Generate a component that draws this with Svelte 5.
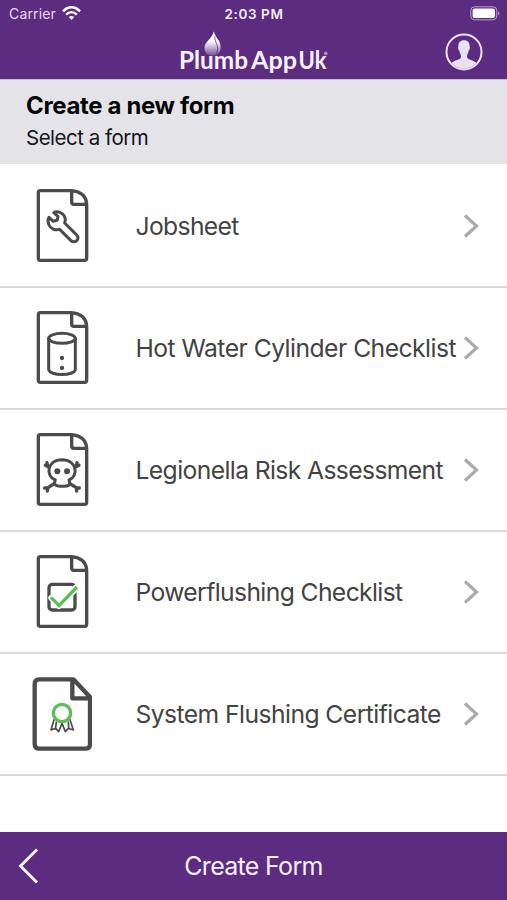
<script lang="ts">
  interface FormItem {
    icon: string
    label: string
    spacing: number
  }

  const forms: FormItem[] = [
    { icon: 'wrench', label: 'Jobsheet', spacing: -0.66 },
    { icon: 'cylinder', label: 'Hot Water Cylinder Checklist', spacing: -0.54 },
    { icon: 'skull', label: 'Legionella Risk Assessment', spacing: -0.62 },
    { icon: 'check', label: 'Powerflushing Checklist', spacing: -0.63 },
    { icon: 'certificate', label: 'System Flushing Certificate', spacing: -0.57 },
  ]
</script>

<div class="screen">
  <header class="top">
    <div class="status">
      <div class="carrier">
        <span>Carrier</span>
        <svg width="19" height="15" viewBox="0 0 19 15" fill="none" stroke="#fff" stroke-width="2.5">
          <path d="M1 5.4C6-.2 13-.2 18 5.4" />
          <path d="M4.2 8.6c3.2-3.2 7.4-3.2 10.6 0" />
          <path d="M6.7 11.1q2.8-2.4 5.6 0L9.5 14z" fill="#fff" stroke="none" />
        </svg>
      </div>
      <span class="time">2:03 PM</span>
      <svg class="battery" width="31" height="15" viewBox="0 0 31 15">
        <rect x=".8" y=".8" width="26" height="13" rx="3.8" fill="none" stroke="#b9a2cc" stroke-width="1" />
        <rect x="2.6" y="2.6" width="22.4" height="9.4" rx="2" fill="#fff" />
        <path d="M28.2 5.2q2.4 2.1 0 4.2z" fill="#b9a2cc" />
      </svg>
    </div>
    <div class="brand">
      <svg class="logo" width="156" height="46" viewBox="0 0 156 46">
        <defs>
          <linearGradient id="flame" x1="0" y1="0" x2="0" y2="1">
            <stop offset=".4" stop-color="#fff" />
            <stop offset="1" stop-color="#79509a" />
          </linearGradient>
        </defs>
        <path d="M36.8 2.2C38 9 44.2 11 43.6 19.2c-.3 4.6-3.6 7.3-8 7.3-5.5 0-8.6-3.7-8.1-8.6C28 12.3 35.5 9.5 36.8 2.2z" fill="url(#flame)" />
        <path d="M37.8 7.5c-.4 6.5 5.4 9.5 1.6 17" fill="none" stroke="#5c2c80" stroke-width=".8" />
        <g class="wordmark">
          <text x="2" y="40.3" textLength="69" lengthAdjust="spacingAndGlyphs">Plumb</text>
          <text x="74" y="40.3" textLength="46" lengthAdjust="spacingAndGlyphs">App</text>
          <text x="121.5" y="40.3" textLength="28" lengthAdjust="spacingAndGlyphs">Uk</text>
        </g>
        <circle cx="148.8" cy="24.4" r="1.9" fill="#a88dbd" />
      </svg>
      <svg class="profile" width="38" height="38" viewBox="0 0 38 38">
        <circle cx="19" cy="19" r="17.5" fill="none" stroke="#e9e0f0" stroke-width="2" />
        <path d="M19 7.2c-4.2 0-6 2.8-5.6 6.6-.9 1 .1 3.3 1 4 .3 2.3 1 3.2 1.5 4.1v2.5c-.8 2.7-6.3 2.1-9.4 5.7a16.5 16.5 0 0 0 25 0c-3.1-3.6-8.6-3-9.4-5.7v-2.5c.5-.9 1.2-1.8 1.5-4.1.9-.7 1.9-3 1-4C25 10 23.2 7.2 19 7.2z" fill="#e9e0f0" />
      </svg>
    </div>
  </header>

  <section class="heading">
    <h1>Create a new form</h1>
    <p>Select a form</p>
  </section>

  <main class="list">
    {#each forms as form}
      <div class="row">
        <svg class="doc" width="60" height="80" viewBox="36 18 180 240" fill="none" stroke="#4b4b4b" stroke-linecap="round" stroke-linejoin="round">
          {#if form.icon === 'certificate'}
            <path d="M160 34H58Q44 34 44 48V228Q44 242 58 242H196Q210 242 210 228V87zM157 36V91H208" stroke-width="13" />
            <path d="M102 155l-9 31 14-5 9 10 10-25 10 25 9-10 15 5-10-31M109 162l-2 17M145 162l1 17" stroke-width="5" />
            <circle cx="126" cy="135" r="26" fill="#fff" stroke="#5dbe57" stroke-width="10" />
          {:else}
            <path d="M153 32H61Q55 32 55 38V235Q55 241 61 241H194Q200 241 200 235V76Q200 36 153 32zM155 33V66Q155 73 162 73H198" stroke-width="10" />
            {#if form.icon === 'wrench'}
              <path d="M101 98C112 91 129 98 134 110C137 117 136 124 134 129L169 164C183 177 164 193 152 181L119 148C105 152 92 146 87 135C83 126 83 119 87 112L100 124L112 120L114 109Z" stroke-width="9" />
            {:else if form.icon === 'cylinder'}
              <ellipse cx="126" cy="109" rx="40" ry="15" stroke-width="9" />
              <path d="M86 109V202C88 223 164 223 166 202V109" stroke-width="9" />
              <circle cx="126" cy="168" r="6.5" fill="#4b4b4b" stroke="none" />
              <circle cx="126" cy="198" r="6.5" fill="#4b4b4b" stroke="none" />
            {:else if form.icon === 'skull'}
              <path d="M76 124L88 130M81 116L83 128M171 116L169 128M177 124L165 130M101 180L84 191L74 192M84 191L82 201M151 180L169 191L178 192M169 191L170 201" stroke-width="10" />
              <path d="M106 168C76 157 80 108 126 107C172 108 176 157 147 168C153 184 147 187 126 187C106 187 100 182 106 168Z" fill="#fff" stroke-width="9" />
              <circle cx="112" cy="142" r="9" fill="#4b4b4b" stroke="none" />
              <circle cx="141" cy="142" r="9" fill="#4b4b4b" stroke="none" />
            {:else}
              <rect x="87" y="115" width="78" height="77" rx="10" stroke-width="10" />
              <path d="M95 156L117 179L169 125" stroke="#fff" stroke-width="20" />
              <path d="M93 154L117 179L171 123" stroke="#5dbe57" stroke-width="10" stroke-linecap="butt" stroke-linejoin="miter" />
            {/if}
          {/if}
        </svg>
        <span class="label" style="letter-spacing: {form.spacing}px">{form.label}</span>
        <svg class="chevron" width="18" height="26" viewBox="0 0 18 26" fill="none" stroke="#ababab" stroke-width="3.2">
          <path d="M3 2.5L14.5 13L3 23.5" />
        </svg>
      </div>
    {/each}
  </main>

  <footer class="bottom">
    <svg class="back" width="24" height="40" viewBox="0 0 24 40" fill="none" stroke="#fff" stroke-width="2.8">
      <path d="M20 3.5L3.5 20L20 36.5" />
    </svg>
    <span>Create Form</span>
  </footer>
</div>

<style>
  :global(body) {
    margin: 0;
    background: #fff;
  }
  .screen {
    display: flex;
    flex-direction: column;
    height: 900px;
    font-family: Inter, 'Liberation Sans', sans-serif;
    background: #fff;
  }
  .top {
    height: 79px;
    box-sizing: border-box;
    background: #5c2c80;
    color: #fff;
    flex-shrink: 0;
  }
  .status {
    display: grid;
    grid-template-columns: 1fr auto 1fr;
    align-items: center;
    height: 27px;
    padding: 0 6px 0 9px;
  }
  .carrier {
    display: flex;
    align-items: center;
    gap: 6px;
    font-size: 14px;
    letter-spacing: 0.15px;
    color: #e6dced;
  }
  .time {
    font-size: 13.5px;
    font-weight: 600;
    letter-spacing: 0.6px;
    margin-left: -2px;
    color: #f4eff7;
  }
  .battery {
    justify-self: end;
  }
  .brand {
    display: grid;
    grid-template-columns: 156px 1fr;
    align-items: center;
    height: 49px;
    padding: 0 24px 0 177px;
  }
  .wordmark {
    font-family: Lato, sans-serif;
    font-size: 24px;
    font-weight: 700;
    fill: #f8f3fb;
  }
  .profile {
    justify-self: end;
  }
  .heading {
    height: 85px;
    box-sizing: border-box;
    padding: 11px 26px 0;
    border-top: 1px solid #c9bcd4;
    background: #e4e3e8;
    flex-shrink: 0;
  }
  h1 {
    margin: 0;
    font-size: 24px;
    line-height: 30px;
    font-weight: 700;
    letter-spacing: -0.35px;
    color: #050505;
  }
  p {
    margin: 4px 0 0;
    font-size: 20.5px;
    line-height: 26px;
    letter-spacing: -0.5px;
    color: #151518;
  }
  .list {
    flex: 1;
    padding-top: 2px;
  }
  .row {
    display: flex;
    align-items: center;
    height: 122px;
    box-sizing: border-box;
    padding: 0 27px 0 32px;
    border-bottom: 2px solid #dadada;
  }
  .doc {
    flex-shrink: 0;
  }
  .label {
    flex: 1;
    min-width: 0;
    margin-left: 43.5px;
    font-size: 24.7px;
    white-space: nowrap;
    color: #434343;
  }
  .chevron {
    flex-shrink: 0;
  }
  .bottom {
    display: grid;
    grid-template-columns: 1fr auto 1fr;
    align-items: center;
    height: 68px;
    box-sizing: border-box;
    padding: 0 17px;
    background: #5c2c80;
    color: #f6effa;
    font-size: 25px;
    letter-spacing: -0.7px;
    flex-shrink: 0;
  }
</style>
